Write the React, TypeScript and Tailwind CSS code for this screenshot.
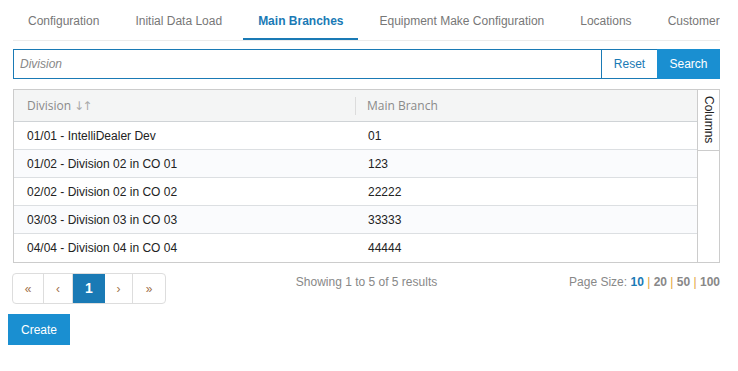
import React from "react";

const tabs = [
  "Configuration",
  "Initial Data Load",
  "Main Branches",
  "Equipment Make Configuration",
  "Locations",
  "Customer",
];

const rows = [
  { division: "01/01 - IntelliDealer Dev", branch: "01" },
  { division: "01/02 - Division 02 in CO 01", branch: "123" },
  { division: "02/02 - Division 02 in CO 02", branch: "22222" },
  { division: "03/03 - Division 03 in CO 03", branch: "33333" },
  { division: "04/04 - Division 04 in CO 04", branch: "44444" },
];

export default function App() {
  return (
    <div className="w-[738px] h-[371px] bg-white overflow-hidden pl-[13px] pr-[18px] font-['Liberation_Sans',Arial,sans-serif] text-[12px]">
      {/* Tabs */}
      <div className="flex gap-[6px] border-b border-[#ececec] overflow-hidden whitespace-nowrap">
        {tabs.map((t) => {
          const active = t === "Main Branches";
          return (
            <div
              key={t}
              className={
                active
                  ? "h-[40px] px-[15px] pt-[14px] leading-[15px] border-b-2 border-[#1a7ab5] text-[#1a7ab5] font-bold shrink-0"
                  : "h-[40px] px-[15px] pt-[14px] leading-[15px] text-[#777] shrink-0"
              }
            >
              {t}
            </div>
          );
        })}
      </div>

      {/* Search */}
      <div className="mt-[8px] flex h-[30px] border border-[#1a7ab5]">
        <input
          placeholder="Division"
          className="flex-1 px-[6px] outline-none italic text-[12px] placeholder:text-[#888] placeholder:italic"
        />
        <button className="w-[56px] border-l border-[#1a7ab5] text-[#1a7ab5] bg-white">Reset</button>
        <button className="w-[63px] bg-[#1a8fd1] text-white -my-px -mr-px">Search</button>
      </div>

      {/* Table */}
      <div className="mt-[10px] flex border border-[#cccccc]">
        <div className="flex-1">
          <div className="flex h-[32px] items-center bg-[#f4f5f5] border-b border-[#cfd3d6] font-['Open_Sans',sans-serif] text-[12px] text-[#8a8a8a]">
            <div className="w-[342px] pl-[13px] flex items-center gap-[3px] border-r border-[#dcdcdc] h-[18px]">
              <span>Division</span>
              <span className="text-[#aaaaaa] text-[12px] tracking-[-2px] font-['DejaVu_Sans',sans-serif]">↓↑</span>
            </div>
            <div className="pl-[11px]">Main Branch</div>
          </div>
          {rows.map((r, i) => (
            <div
              key={r.division}
              className={`flex h-[28px] items-center text-[#222] ${i < rows.length - 1 ? "border-b border-[#dcdfe2]" : ""} ${i % 2 === 1 ? "bg-[#fafbfd]" : "bg-white"}`}
            >
              <div className="w-[342px] pl-[13px]">{r.division}</div>
              <div className="pl-[12px]">{r.branch}</div>
            </div>
          ))}
        </div>
        <div className="w-[22px] border-l border-[#cccccc]">
          <div className="h-[61px] border-b border-[#cccccc] flex justify-center pt-[6px]">
            <span className="[writing-mode:vertical-rl] text-[12px] text-[#222] leading-[22px]">Columns</span>
          </div>
        </div>
      </div>

      {/* Pager row */}
      <div className="mt-[10px] flex items-start">
        <div className="flex-1">
          <div className="-ml-px inline-flex h-[31px] border border-[#ddd] rounded-[4px] overflow-hidden text-[#a0704a]">
            <div className="w-[31px] flex items-center justify-center text-[12px] border-r border-[#ddd]">«</div>
            <div className="w-[29px] flex items-center justify-center text-[12px] border-r border-[#ddd]">‹</div>
            <div className="w-[32px] flex items-center justify-center bg-[#1a7ab5] text-white font-bold text-[14px]">1</div>
            <div className="w-[28px] flex items-center justify-center text-[12px] border-r border-[#ddd]">›</div>
            <div className="w-[32px] flex items-center justify-center text-[12px]">»</div>
          </div>
        </div>
        <div className="pt-[1px] leading-[16px] text-[#888] text-[12px]">Showing 1 to 5 of 5 results</div>
        <div className="flex-1 flex justify-end pt-[1px] leading-[16px] text-[12px] text-[#888] whitespace-nowrap">
          <span>
            Page Size: <b className="text-[#1a7ab5]">10</b> <span className="text-[#e2a23a]">|</span>{" "}
            <b>20</b> <span className="text-[#e2a23a]">|</span> <b>50</b>{" "}
            <span className="text-[#e2a23a]">|</span> <b>100</b>
          </span>
        </div>
      </div>

      <button className="mt-[10px] -ml-[5px] w-[62px] h-[31px] bg-[#1a8fd1] text-white text-[12px]">Create</button>
    </div>
  );
}
